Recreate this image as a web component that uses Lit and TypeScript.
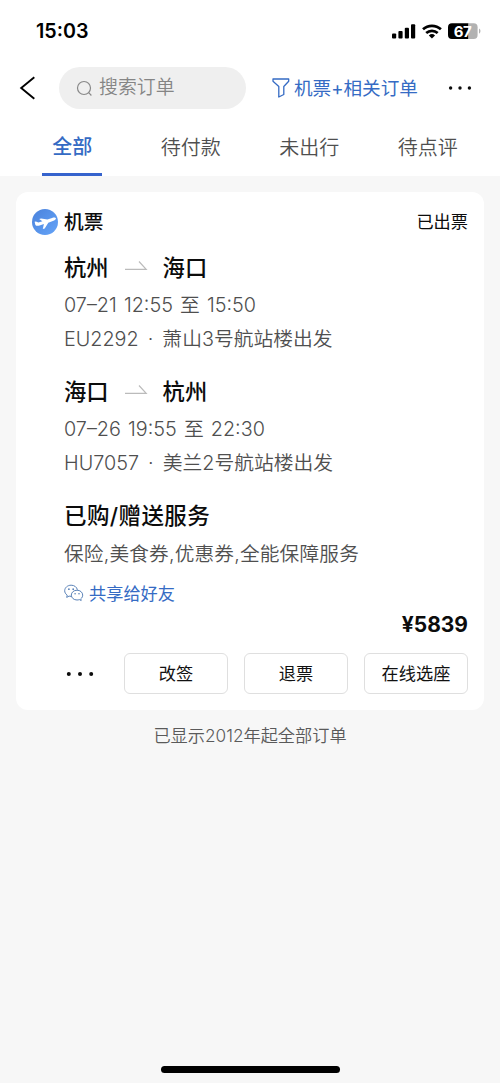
import { LitElement, html, css, svg } from "lit";
import { customElement, property } from "lit/decorators.js";

interface Leg {
  from: string;
  to: string;
  time: string;
  flight: string;
}

const legs: Leg[] = [
  { from: "杭州", to: "海口", time: "07–21 12:55 至 15:50", flight: "EU2292 · 萧山3号航站楼出发" },
  { from: "海口", to: "杭州", time: "07–26 19:55 至 22:30", flight: "HU7057 · 美兰2号航站楼出发" },
];

const dots = (r: number, step: number) => html`<svg width="30" height="8" viewBox="0 0 30 8">
  ${[15 - step, 15, 15 + step].map((x) => svg`<circle cx=${x} cy="4" r=${r} fill="#0c0c0c"/>`)}
</svg>`;

@customElement("status-bar")
class StatusBar extends LitElement {
  static styles = css`
    :host { display: flex; justify-content: space-between; align-items: center; height: 62px; padding: 0 19px 0 36px; box-sizing: border-box;
      font-family: Inter, sans-serif; color: #000; }
    .time { font-size: 19.7px; font-weight: 600; line-height: 62px; }
    .level { font: 700 15px Inter, sans-serif; letter-spacing: -0.3px; }
  `;
  render() {
    return html`<span class="time">15:03</span>
      <svg width="90" height="18" viewBox="0 0 90 18">
        <rect x="1" y="11.5" width="4.2" height="5" rx="1"/>
        <rect x="7.4" y="9" width="4.2" height="7.5" rx="1"/>
        <rect x="13.8" y="5.7" width="4.2" height="10.8" rx="1"/>
        <rect x="20" y="2.2" width="4.2" height="14.3" rx="1"/>
        <g fill="none" stroke="#000" stroke-width="2.7">
          <path d="M32 7.3a13.2 13.2 0 0 1 17.9 0"/>
          <path d="M35.2 11a8.6 8.6 0 0 1 11.5 0"/>
        </g>
        <path d="M40.95 16.6l-3.1-3.2a4.5 4.5 0 0 1 6.2 0z"/>
        <path d="M61 1.3h16.5v15.8H61a4 4 0 0 1-4-4V5.3a4 4 0 0 1 4-4z"/>
        <path d="M77.5 1.3h5.100a4 4 0 0 1 4 4v7.800a4 4 0 0 1-4 4h-5.100z" fill="#b2b2b2"/>
        <path d="M88 6.500a3 3 0 0 1 0 5.200z" fill="#b2b2b2"/>
        <text class="level" x="71.600" y="14.700" text-anchor="middle" fill="#fff">67</text>
      </svg>`;
  }
}

@customElement("order-header")
class OrderHeader extends LitElement {
  static styles = css`
    :host { display: block; }
    svg { display: block; flex: none; }
    .nav { display: flex; align-items: center; height: 42px; margin-top: 5px; padding: 0 25px 0 19px; }
    .search { display: flex; align-items: center; gap: 6px; width: 187px; height: 42px; box-sizing: border-box; padding-left: 17px; margin-left: 22px; border-radius: 21px; background: #efefef; color: #858585; font-size: 18.9px; font-weight: 350; }
    .nav span { padding-top: 1px; }
    .filter { display: flex; align-items: center; gap: 4px; margin-left: 26px; color: #356bc4; font-size: 18.6px; white-space: nowrap; }
    .more { margin-left: auto; }
    .tabs { display: flex; height: 67px; padding: 0 13px; }
    .tab { flex: 1; display: flex; flex-direction: column; align-items: center; justify-content: space-between; font-size: 20px; font-weight: 350; line-height: 30px; padding-top: 24px; color: #4f4f4f; }
    .tab.active { color: #356bc4; font-weight: 500; padding-top: 23px; }
    .bar { width: 60px; height: 3px; background: #3563cd; }
  `;
  render() {
    return html`<div class="nav">
        <svg width="18" height="24" viewBox="0 0 18 24"><path d="M15.3 1.3L2.2 12l13.1 10.8" fill="none" stroke="#000" stroke-width="1.9"/></svg>
        <div class="search">
          <svg width="17" height="17" viewBox="0 0 17 17" fill="none" stroke="#888" stroke-width="1.2"><circle cx="8" cy="8" r="6.5"/><path d="M12.7 12.7l2.7 2.8"/></svg>
          <span>搜索订单</span>
        </div>
        <div class="filter">
          <svg width="18" height="20" viewBox="0 0 18 20" fill="none" stroke="#356bc4" stroke-width="1.3" stroke-linejoin="round"><path d="M1 1h15.700v2.200l-4.900 5.300v8l-5 2.500V8.500L1 3.200z"/></svg>
          <span>机票+相关订单</span>
        </div>
        <div class="more">${dots(1.7, 9.4)}</div>
      </div>
      <div class="tabs">
        ${["全部", "待付款", "未出行", "待点评"].map(
          (t, i) => html`<div class="tab ${i === 0 ? "active" : ""}"><span>${t}</span>${i === 0 ? html`<i class="bar"></i>` : ""}</div>`
        )}
      </div>`;
  }
}

@customElement("flight-leg")
class FlightLeg extends LitElement {
  @property({ attribute: false }) leg!: Leg;
  static styles = css`
    :host { display: block; margin-bottom: 18px; }
    .route { display: flex; align-items: center; height: 34px; margin-bottom: 4px; font-size: 22.3px; font-weight: 500; color: #0c0c0c; }
    .route span { padding-top: 2px; }
    .arrow { display: block; margin: 0 15px 4px; }
    .line { height: 34px; line-height: 35px; font-size: 19.8px; font-weight: 350; color: #4f4f4f; white-space: nowrap; }
    .time { word-spacing: 1.6px; }
    .flight { word-spacing: 3.5px; }
  `;
  render() {
    return html`<div class="route">
        <span>${this.leg.from}</span>
        <svg class="arrow" width="24" height="12" viewBox="0 0 24 12"><path d="M1 10.3h21.2L15 2.5" fill="none" stroke="#bbb" stroke-width="1.2"/></svg>
        <span>${this.leg.to}</span>
      </div>
      <div class="line time">${this.leg.time}</div>
      <div class="line flight">${this.leg.flight}</div>`;
  }
}

@customElement("order-card")
class OrderCard extends LitElement {
  static styles = css`
    :host { display: block; margin: 16px 16px 0; padding: 12px 16px 16px; border-radius: 12px; background: #fff; }
    svg { display: block; flex: none; }
    .title { display: flex; align-items: center; gap: 6px; height: 36px; margin-bottom: 10px; font-size: 19.7px; font-weight: 500; color: #0c0c0c; }
    .title span, .share span, .btn span { padding-top: 2px; }
    .title .state { margin-left: auto; padding-top: 1px; font-size: 17.2px; font-weight: 400; }
    .body { padding-left: 32px; }
    .heading { height: 34px; line-height: 36px; margin-bottom: 4px; font-size: 22.5px; letter-spacing: 0.4px; font-weight: 500; color: #0c0c0c; }
    .services { height: 34px; line-height: 36px; font-size: 19.7px; letter-spacing: 0.16px; font-weight: 350; color: #4f4f4f; white-space: nowrap; }
    .share { display: flex; align-items: center; gap: 5px; height: 34px; margin-top: 6px; font-size: 17.2px; color: #356bc4; }
    .price { height: 30px; line-height: 30px; text-align: right; font-family: Inter, sans-serif; font-size: 21px; font-weight: 700; color: #0c0c0c; }
    .actions { display: flex; justify-content: flex-end; align-items: center; gap: 16px; margin-top: 13px; }
    .more { margin-right: auto; padding-left: 33px; }
    .btn { width: 104px; height: 41px; box-sizing: border-box; border: 1px solid #dfdfdf; border-radius: 6px; display: flex; align-items: center; justify-content: center; font-size: 17.2px; color: #111; }
  `;
  render() {
    return html`<div class="title">
        <svg width="26" height="26" viewBox="0 0 26 26">
          <defs><linearGradient id="g" x1="0" y1="0" x2="1" y2="1"><stop offset="0" stop-color="#4a82dc"/><stop offset="1" stop-color="#65a4f8"/></linearGradient></defs>
          <circle cx="13" cy="13" r="13" fill="url(#g)"/>
          <path d="M2.6 12.8l1.300-.4 2.500 1.200 4-1.300-3.200-2.300 1.900-.6 6.300 1.200 4.700-1.600c1.700-.6 3.500-.5 3.800.3.300.9-.8 1.900-2.400 2.500l-5.200 1.900-3.600 5.700-1.900.6 1.100-4.900-4.300 1.300c-1.900.6-3.500.4-4.200-.5z" fill="#fff"/>
        </svg>
        <span>机票</span><span class="state">已出票</span>
      </div>
      <div class="body">
        ${legs.map((l) => html`<flight-leg .leg=${l}></flight-leg>`)}
        <div class="heading">已购/赠送服务</div>
        <div class="services">保险,美食券,优惠券,全能保障服务</div>
        <div class="share">
          <svg width="20" height="18" viewBox="0 0 20 18" fill="none" stroke="#5a82b8" stroke-width="1">
            <path d="M7.200 12.400c-.7 0-1.400-.1-2.100-.3l-2.400 1.300.5-2.300C1.600 10 .7 8.500.7 6.800.7 3.600 3.600 1.200 7.100 1.200c3.200 0 5.800 1.900 6.300 4.600"/>
            <path d="M13 6.200c3.200 0 5.700 2.200 5.700 4.900 0 1.500-.7 2.800-1.900 3.700l.4 1.700-1.900-.9c-.7.300-1.500.4-2.300.4-3.200 0-5.700-2.200-5.700-4.900s2.500-4.900 5.700-4.900z"/>
            <g fill="#5a82b8" stroke="none"><circle cx="4.900" cy="5.200" r=".9"/><circle cx="9.200" cy="5.200" r=".9"/><circle cx="11.100" cy="9.800" r=".8"/><circle cx="15" cy="9.800" r=".8"/></g>
          </svg>
          <span>共享给好友</span>
        </div>
      </div>
      <div class="price">¥5839</div>
      <div class="actions">
        <div class="more">${dots(2, 11.2)}</div>
        ${["改签", "退票", "在线选座"].map((t) => html`<div class="btn"><span>${t}</span></div>`)}
      </div>`;
  }
}

@customElement("app-root")
class AppRoot extends LitElement {
  static styles = css`
    :host { display: flex; flex-direction: column; height: 1083px; background: #f7f7f7; font-family: Inter, "Noto Sans CJK SC", sans-serif; line-height: 1.4; }
    .top { background: #fff; }
    .end { margin-top: 10px; height: 30px; line-height: 32px; text-align: center; font-size: 17.2px; font-weight: 350; color: #5a5a5a; }
    .home { width: 179px; height: 7px; border-radius: 4px; background: #000; margin: auto auto 10px; }
  `;
  render() {
    return html`<div class="top"><status-bar></status-bar><order-header></order-header></div>
      <order-card></order-card>
      <div class="end">已显示2012年起全部订单</div>
      <div class="home"></div>`;
  }
}
